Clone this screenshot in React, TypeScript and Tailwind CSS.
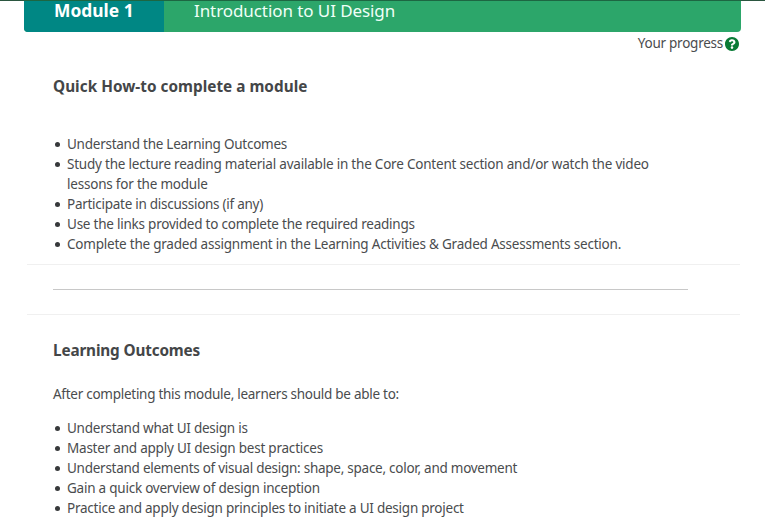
import type { ReactNode } from "react";

function Bullet({ children, fit }: { children: ReactNode; fit: string }) {
  return (
    <li className="flex">
      <span className="mt-[8px] mr-[7px] h-[5px] w-[5px] shrink-0 rounded-full bg-[#37393b]" />
      <span className={"whitespace-nowrap " + fit}>{children}</span>
    </li>
  );
}

export default function App() {
  return (
    <main className="h-[522px] w-[765px] overflow-hidden bg-white font-['Noto_Sans','Open_Sans',sans-serif] text-[13.5px] leading-5 text-[#4a4c4e]">
      <div className="h-px bg-[#2b5640] px-6">
        <div className="h-px w-[717px] bg-[#1d6642]" />
      </div>
      <header className="ml-6 flex h-[31px] w-[717px] rounded-b-[4px] bg-[#2ca66a] leading-5 text-white">
        <h1 className="w-[140px] rounded-bl-[4px] bg-[#008784] pl-[30px] text-[17.400px] leading-[19px] font-bold whitespace-nowrap">Module 1</h1>
        <p className="pl-[30px] text-[17px] tracking-[-0.08px] whitespace-nowrap text-[#effff7]">Introduction to UI Design</p>
      </header>
      <div className="mr-[26px] flex h-[23px] items-start justify-end gap-[2px]">
        <span className="mt-px tracking-[-0.25px]">Your progress</span>
        <svg viewBox="8 8 496 496" className="mt-[5px] h-[14px] w-[14px] fill-[#087a35]">
          <path d="M504 256c0 137-111 248-248 248S8 393 8 256 119 8 256 8s248 111 248 248zM262.700 90c-54.500 0-89.300 23-116.500 63.800-3.500 5.300-2.400 12.400 2.700 16.300l34.700 26.300c5.200 3.900 12.600 3 16.700-2.100 17.900-22.700 30.100-35.800 57.300-35.800 20.400 0 45.700 13.100 45.700 33 0 15-12.400 22.700-32.500 34C247 238.500 216 254.900 216 296v4c0 6.600 5.400 12 12 12h56c6.600 0 12-5.400 12-12v-1.300c0-28.500 83.200-29.600 83.200-106.700 0-58-60.200-102-116.500-102zM256 338c-25.400 0-46 20.600-46 46 0 25.400 20.600 46 46 46s46-20.600 46-46c0-25.400-20.600-46-46-46z" />
        </svg>
      </div>
      <section className="pt-[21px] pl-[53px]">
        <h2 className="text-[15.300px] tracking-[0.03px] font-bold text-[#444648]">Quick How-to complete a module</h2>
        <ul className="mt-[38px] pl-[2px]">
          <Bullet fit="tracking-[-0.25px]">Understand the Learning Outcomes</Bullet>
          <Bullet fit="tracking-[-0.21px]">Study the lecture reading material available in the Core Content section and/or watch the video<br />lessons for the module</Bullet>
          <Bullet fit="tracking-[-0.27px]">Participate in discussions (if any)</Bullet>
          <Bullet fit="tracking-[-0.23px]">Use the links provided to complete the required readings</Bullet>
          <Bullet fit="tracking-[-0.22px]">Complete the graded assignment in the Learning Activities &amp; Graded Assessments section.</Bullet>
        </ul>
      </section>
      <div className="mt-[10px] ml-[27px] flex h-[51px] w-[713px] items-center border-y border-[#f0f0f0] pl-[26px]">
        <div className="h-px w-[635px] bg-[#c8c8c8]" />
      </div>
      <section className="pt-[25px] pl-[53px]">
        <h2 className="text-[15.300px] tracking-[-0.15px] font-bold text-[#444648]">Learning Outcomes</h2>
        <p className="mt-6 tracking-[-0.27px]">After completing this module, learners should be able to:</p>
        <ul className="mt-[14px] pl-[2px]">
          <Bullet fit="tracking-[-0.25px]">Understand what UI design is</Bullet>
          <Bullet fit="tracking-[-0.22px]">Master and apply UI design best practices</Bullet>
          <Bullet fit="tracking-[-0.26px]">Understand elements of visual design: shape, space, color, and movement</Bullet>
          <Bullet fit="tracking-[-0.23px]">Gain a quick overview of design inception</Bullet>
          <Bullet fit="tracking-[-0.245px]">Practice and apply design principles to initiate a UI design project</Bullet>
        </ul>
      </section>
    </main>
  );
}
